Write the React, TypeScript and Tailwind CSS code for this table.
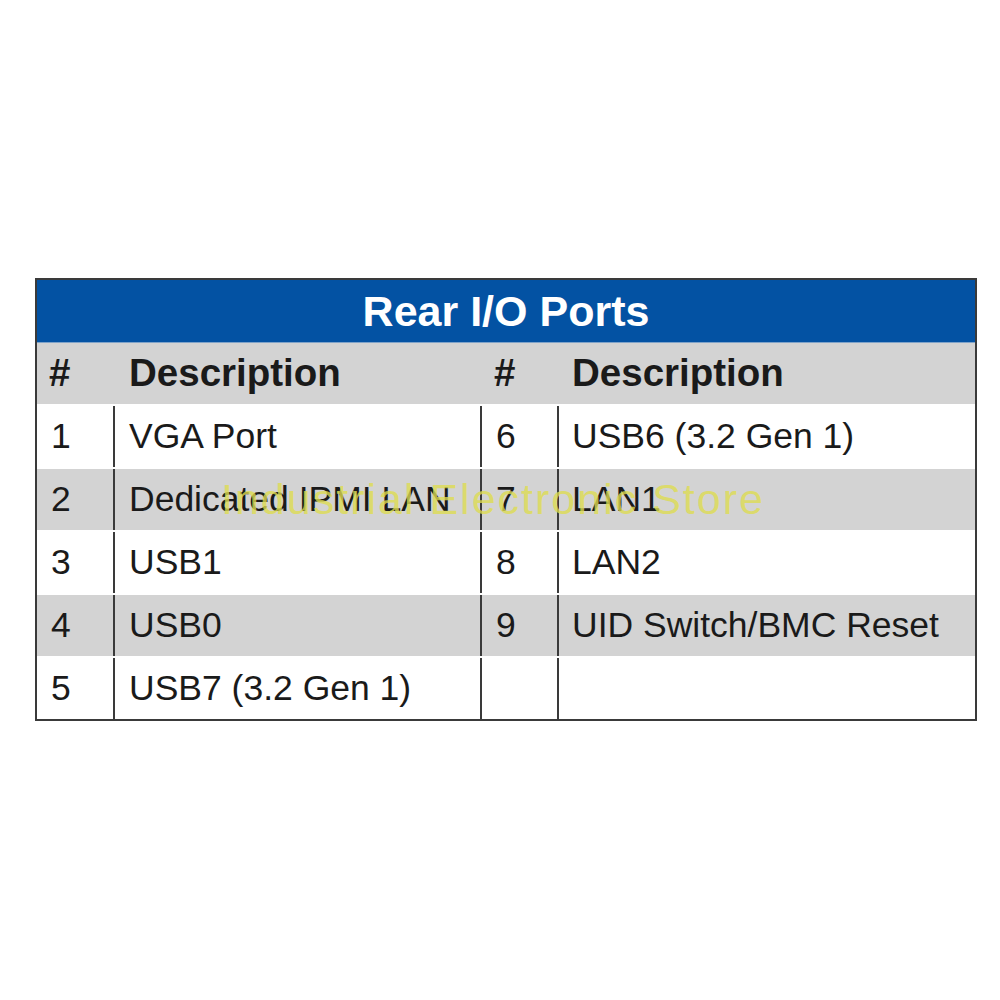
import React from 'react';

const rows: [string, string, string, string][] = [
  ['1', 'VGA Port', '6', 'USB6 (3.2 Gen 1)'],
  ['2', 'Dedicated IPMI LAN', '7', 'LAN1'],
  ['3', 'USB1', '8', 'LAN2'],
  ['4', 'USB0', '9', 'UID Switch/BMC Reset'],
  ['5', 'USB7 (3.2 Gen 1)', '', ''],
];

const App = () => {
  return (
    <div
      className="w-[1000px] h-[1000px] bg-white pt-[278px] pl-[35px]"
      style={{ fontFamily: '"Liberation Sans", Arial, sans-serif' }}
    >
      <div className="relative w-[942px] border-2 border-[#3a3a3a] bg-white">
        {/* Title bar */}
        <div className="h-[62px] bg-[#0352a3] flex items-center justify-center">
          <h1 className="text-[43px] font-bold text-white leading-none">Rear I/O Ports</h1>
        </div>

        {/* Column header */}
        <div className="h-[62px] bg-[#d3d3d3] border-t border-[#7fa3c9] grid grid-cols-[76px_367px_77px_1fr] items-center text-[38.5px] font-bold text-[#1a1a1a] leading-none">
          <div className="pl-[12px]">#</div>
          <div className="pl-[16px]">Description</div>
          <div className="pl-[14px]">#</div>
          <div className="pl-[15px]">Description</div>
        </div>

        {/* Body rows */}
        {rows.map((r, i) => (
          <div
            key={r[0]}
            className={
              'grid grid-cols-[76px_367px_77px_1fr] border-t-2 border-white text-[35.5px] text-[#1a1a1a] leading-none ' +
              (i % 2 === 1 ? 'bg-[#d3d3d3]' : 'bg-white')
            }
          >
            <div className="h-[61px] flex items-center pl-[14px]">{r[0]}</div>
            <div className="h-[61px] flex items-center pl-[14px] border-l-2 border-[#3a3a3a]">{r[1]}</div>
            <div className="h-[61px] flex items-center pl-[14px] border-l-2 border-[#3a3a3a]">{r[2]}</div>
            <div className="h-[61px] flex items-center pl-[13px] border-l-2 border-[#3a3a3a]">{r[3]}</div>
          </div>
        ))}

        {/* Watermark */}
        <div className="absolute left-[184px] top-[198px] text-[43px] leading-none text-[#dedc50]/80 tracking-[2px] pointer-events-none whitespace-nowrap">
          Industrial Electronic Store
        </div>
      </div>
    </div>
  );
};

export default App;
